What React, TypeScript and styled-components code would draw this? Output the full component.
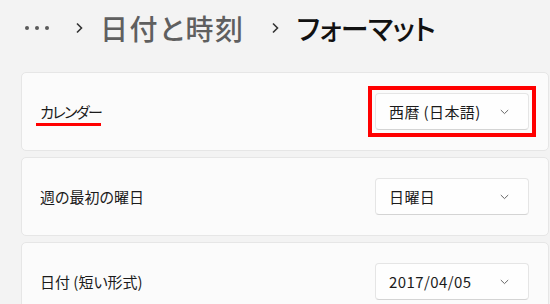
import React from 'react';
import styled, { createGlobalStyle } from 'styled-components';

const GlobalStyle = createGlobalStyle`
  html, body {
    margin: 0;
    padding: 0;
    background: #f3f3f3;
    font-family: "Noto Sans CJK JP", "Noto Sans", sans-serif;
    font-feature-settings: "palt";
    overflow: hidden;
  }
`;

const Page = styled.div`
  width: 550px;
  height: 304px;
  padding: 0 1px 0 21px;
  box-sizing: border-box;
  overflow: hidden;
`;

const Breadcrumb = styled.div`
  height: 72px;
  display: flex;
  align-items: center;
  padding-left: 4px;
  padding-bottom: 16px;
  box-sizing: border-box;
`;

const Dots = styled.span`
  display: flex;
  gap: 6px;
`;

const Dot = styled.i`
  width: 4px;
  height: 4px;
  border-radius: 50%;
  background: #5a5a5a;
`;

const Crumb = styled.span<{ $current?: boolean }>`
  font-size: 28px;
  font-weight: 500;
  letter-spacing: ${p => (p.$current ? '-0.5px' : '1.6px')};
  color: ${p => (p.$current ? '#111' : '#5f5f5f')};
  line-height: 1;
`;

const Sep = styled.span<{ $first?: boolean }>`
  display: flex;
  align-items: center;
  margin: ${p => (p.$first ? '0 16px 0 26px' : '0 17px 0 26px')};
`;

const List = styled.div`
  display: flex;
  flex-direction: column;
  gap: 6px;
`;

const Card = styled.div`
  height: 79px;
  flex: 0 0 auto;
  background: #fbfbfb;
  border: 1px solid #e6e6e6;
  border-radius: 5px;
  display: flex;
  align-items: center;
  justify-content: space-between;
  padding: 0 16px 0 18px;
  box-sizing: border-box;
`;

const Label = styled.span<{ $marked?: boolean }>`
  position: relative;
  font-size: 15px;
  color: #1b1b1b;
  ${p =>
    p.$marked &&
    `
    letter-spacing: -1.5px;
    &::after {
      content: '';
      position: absolute;
      left: -4px;
      right: 0;
      bottom: -4px;
      height: 3px;
      background: #f00;
    }
  `}
`;

const Highlight = styled.div<{ $on?: boolean }>`
  padding: 3px;
  margin-right: -4px;
  border: ${p => (p.$on ? '4px solid #f00' : '4px solid transparent')};
`;

const Select = styled.div`
  width: 154px;
  height: 37px;
  box-sizing: border-box;
  background: #fefefe;
  border: 1px solid #e5e5e5;
  border-bottom-color: #d4d4d4;
  border-radius: 4px;
  display: flex;
  align-items: center;
  justify-content: space-between;
  padding: 0 19px 0 13px;
  font-size: 15px;
  letter-spacing: 0.4px;
  color: #1b1b1b;
`;

const Chevron = () => (
  <svg width="9" height="6" viewBox="0 0 9 6">
    <path d="M0.8 1 L4.5 4.6 L8.2 1" fill="none" stroke="#666" strokeWidth="1" />
  </svg>
);

const Arrow = () => (
  <svg width="9" height="14" viewBox="0 0 9 14">
    <path d="M2 2.5 L6.5 7 L2 11.5" fill="none" stroke="#333" strokeWidth="1.6" />
  </svg>
);

const rows = [
  { label: 'カレンダー', value: '西暦 (日本語)', marked: true },
  { label: '週の最初の曜日', value: '日曜日' },
  { label: '日付 (短い形式)', value: '2017/04/05' },
];

export default function App() {
  return (
    <Page>
      <GlobalStyle />
      <Breadcrumb>
        <Dots><Dot /><Dot /><Dot /></Dots>
        <Sep $first><Arrow /></Sep>
        <Crumb>日付と時刻</Crumb>
        <Sep><Arrow /></Sep>
        <Crumb $current>フォーマット</Crumb>
      </Breadcrumb>
      <List>
        {rows.map(r => (
          <Card key={r.label}>
            <Label $marked={r.marked}>{r.label}</Label>
            <Highlight $on={r.marked}>
              <Select>
                <span>{r.value}</span>
                <Chevron />
              </Select>
            </Highlight>
          </Card>
        ))}
      </List>
    </Page>
  );
}
